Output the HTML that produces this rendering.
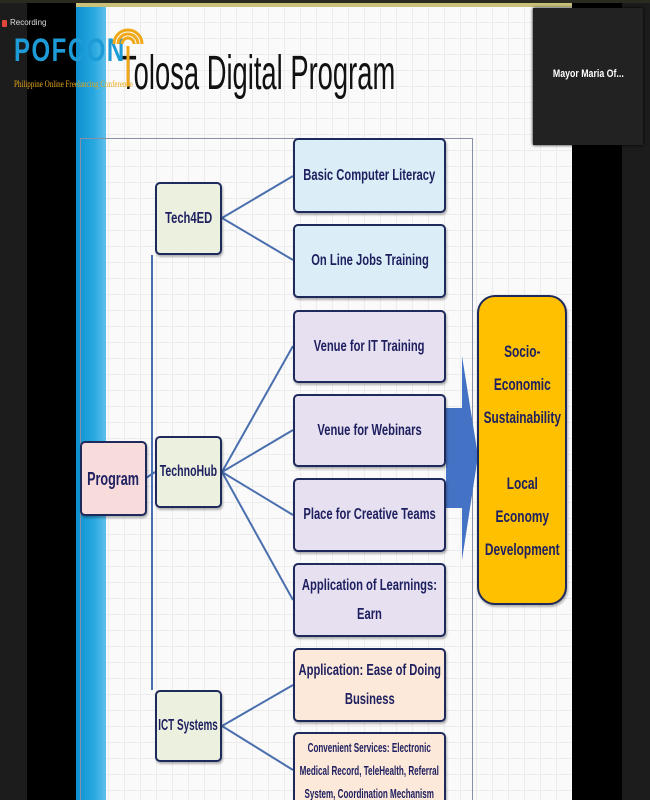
<!DOCTYPE html>
<html><head><meta charset="utf-8"><style>
*{margin:0;padding:0;box-sizing:border-box}
html,body{width:650px;height:800px;overflow:hidden}
body{background:#000;position:relative;font-family:"Liberation Sans",sans-serif}
.a{position:absolute}
.bx{position:absolute;border:2px solid #1f2a5c;border-radius:5px;display:flex;align-items:center;justify-content:center;text-align:center;color:#1f2060;font-weight:bold;font-size:16px;line-height:28px;box-shadow:1px 2px 2px rgba(0,0,0,.3);overflow:hidden}
.bx span{display:inline-block;white-space:nowrap;transform:scaleX(.7)}
.blue{background:#dbeef7}.pur{background:#e6e0f0}.pea{background:#fde9d9}.grn{background:#ebf1de}
</style></head><body>
<div class="a" style="left:0;top:0;width:27px;height:800px;background:#1c1c1c"></div>
<div class="a" style="left:622px;top:0;width:28px;height:800px;background:#1c1c1c"></div>
<div class="a" style="left:76px;top:6px;width:496px;height:794px;background:#fafafa;background-image:linear-gradient(#ececec 1px,transparent 1px),linear-gradient(90deg,#ececec 1px,transparent 1px);background-size:16px 16px"></div>
<div class="a" style="left:76px;top:6px;width:30px;height:794px;background:linear-gradient(90deg,#0c8fcf,#29a8e0 60%,#5fc0ea)"></div>
<div class="a" style="left:76px;top:3px;width:496px;height:4px;background:#c9c07a"></div>
<div class="a" style="left:0;top:0;width:650px;height:3px;background:#2a2a20"></div>
<div class="a" style="left:2px;top:20px;width:5px;height:7px;background:#e0463a;border-radius:1px"></div>
<div class="a" style="left:10px;top:18px;font-size:8px;color:#ddd">Recording</div>
<div class="a" style="left:120px;top:46px;font-size:48px;color:#111;white-space:nowrap;transform:scaleX(.57);transform-origin:0 0">Tolosa Digital Program</div>
<div class="a" style="left:14px;top:32px;font-size:32px;font-weight:bold;color:#1d9bd7;letter-spacing:2px;transform:scaleX(.75);transform-origin:0 0">POFCON</div>
<div class="a" style="left:14px;top:79px;font-size:9px;color:#e6a817;font-family:'Liberation Serif',serif;white-space:nowrap;transform:scaleX(.78);transform-origin:0 0">Philippine Online Freelancing Conference</div>
<svg class="a" style="left:110px;top:22px" width="34" height="70" viewBox="0 0 34 70"><g fill="none" stroke="#f0a818" stroke-width="3"><path d="M8 22a10 10 0 0 1 20 0"/><path d="M4 22a14 14 0 0 1 28 0"/><path d="M12 22a6 6 0 0 1 12 0"/><path d="M18 24v40"/></g></svg>
<div class="a" style="left:533px;top:8px;width:110px;height:137px;background:#222;box-shadow:0 0 3px #000"></div>
<div class="a" style="left:533px;top:68px;width:110px;text-align:center;color:#fff;font-size:11px;font-weight:bold"><span style="display:inline-block;transform:scaleX(.8)">Mayor Maria Of...</span></div>
<div class="a" style="left:80px;top:138px;width:393px;height:670px;border:1px solid #8a8fa8"></div>
<svg class="a" style="left:0;top:0" width="650" height="800"><g stroke="#4a6fae" stroke-width="2" fill="none">
<path d="M152 255L152 690"/><path d="M146 478L155 472"/>
<path d="M222 218L293 176M222 218L293 260"/>
<path d="M222 472L293 346M222 472L293 430M222 472L293 515M222 472L293 600"/>
<path d="M222 726L293 685M222 726L293 770"/>
</g>
<path d="M446 408L462 408L462 356L478 456L462 560L462 508L446 508Z" fill="#4472c4"/>
</svg>
<div class="bx grn" style="left:155px;top:182px;width:67px;height:73px"><span>Tech4ED</span></div>
<div class="bx pea" style="left:80px;top:441px;width:67px;height:75px;background:#f8dcdc;font-size:18px"><span>Program</span></div>
<div class="bx grn" style="left:155px;top:436px;width:67px;height:72px"><span style="transform:scaleX(.66)">TechnoHub</span></div>
<div class="bx grn" style="left:155px;top:690px;width:67px;height:72px"><span style="transform:scaleX(.62)">ICT Systems</span></div>
<div class="bx blue" style="left:293px;top:138px;width:153px;height:75px"><span>Basic Computer Literacy</span></div>
<div class="bx blue" style="left:293px;top:224px;width:153px;height:74px"><span>On Line Jobs Training</span></div>
<div class="bx pur" style="left:293px;top:310px;width:153px;height:73px"><span>Venue for IT Training</span></div>
<div class="bx pur" style="left:293px;top:394px;width:153px;height:73px"><span>Venue for Webinars</span></div>
<div class="bx pur" style="left:293px;top:478px;width:153px;height:74px"><span>Place for Creative Teams</span></div>
<div class="bx pur" style="left:293px;top:563px;width:153px;height:74px;line-height:29px"><span>Application of Learnings:<br>Earn</span></div>
<div class="bx pea" style="left:293px;top:648px;width:153px;height:74px;line-height:29px"><span>Application: Ease of Doing<br>Business</span></div>
<div class="bx pea" style="left:293px;top:732px;width:153px;height:80px;align-items:flex-start;padding-top:2px;font-size:13px;line-height:23px"><span style="transform:scaleX(.62)">Convenient Services: Electronic<br>Medical Record, TeleHealth, Referral<br>System, Coordination Mechanism</span></div>
<div class="bx" style="left:477px;top:295px;width:90px;height:310px;background:#ffc000;border-radius:18px;font-size:17px;line-height:33px"><span>Socio-<br>Economic<br>Sustainability<br><br>Local<br>Economy<br>Development</span></div>
</body></html>
